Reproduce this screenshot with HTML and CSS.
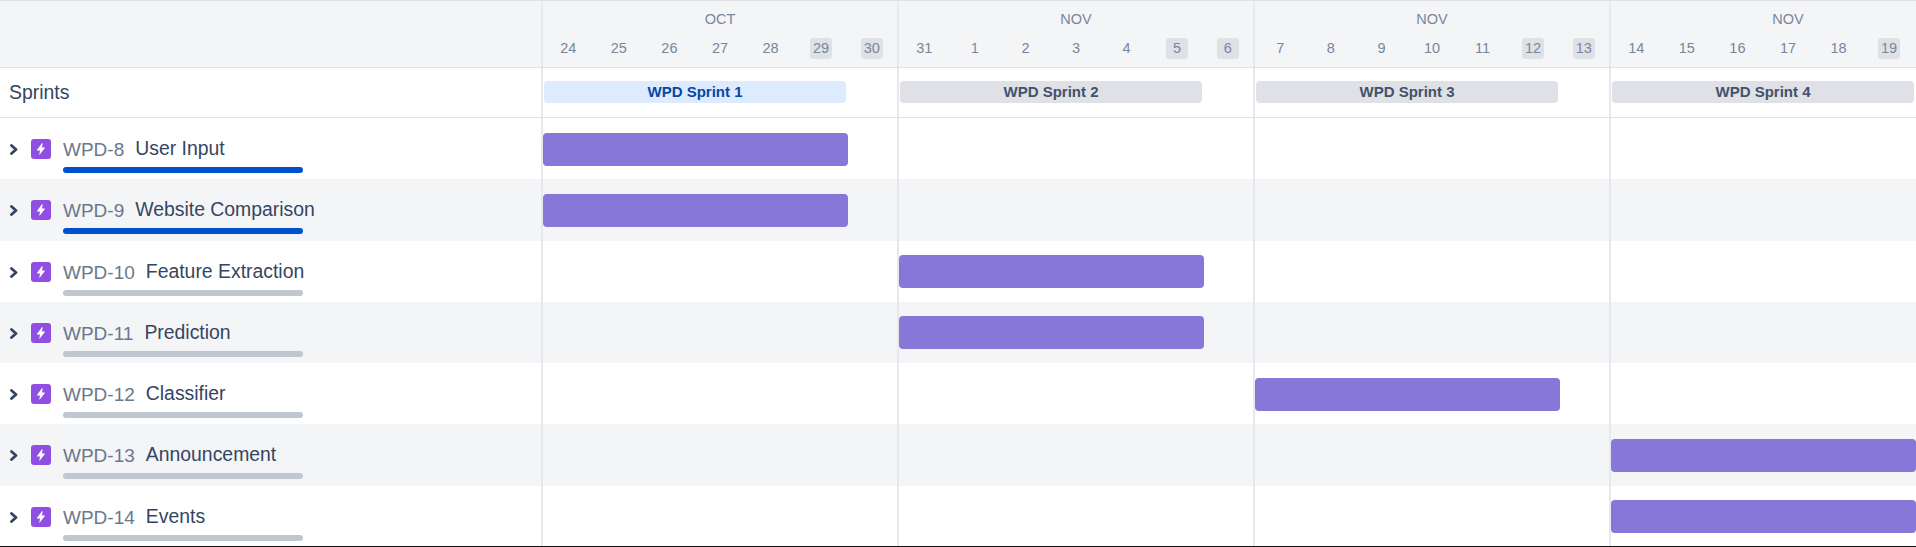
FILE: index.html
```html
<!DOCTYPE html>
<html lang="en">

<head>
    <meta charset="UTF-8">
    <title>Roadmap</title>
    <link rel="stylesheet" href="styles.css">
</head>

<body>
    <svg class="defs" width="0" height="0">
        <symbol id="chevron" viewBox="0 0 8 11">
            <path d="M1.5 1.5 L6 5.5 L1.5 9.5" fill="none" stroke="#344563" stroke-width="2.8" stroke-linecap="round" stroke-linejoin="round"></path>
        </symbol>
        <symbol id="epic" viewBox="0 0 20 20">
            <rect width="20" height="20" rx="3" fill="#904ee2"></rect>
            <path d="M10.9 4.2 L6 10.9 Q5.7 11.5 6.4 11.5 H9 L8.3 15.5 Q8.3 16 8.8 15.6 L13.9 9 Q14.2 8.4 13.6 8.4 H11 L11.6 4.5 Q11.5 3.8 10.9 4.2 Z" fill="#fff"></path>
        </symbol>
    </svg>

    <div class="roadmap">
        <!-- header -->
        <div class="row head">
            <div class="side"></div>
            <div class="month">
                <div class="month-name">OCT</div>
                <div class="days">
                    <span>24</span><span>25</span><span>26</span><span>27</span><span>28</span><span class="weekend">29</span><span class="weekend">30</span>
                </div>
            </div>
            <div class="month">
                <div class="month-name">NOV</div>
                <div class="days">
                    <span>31</span><span>1</span><span>2</span><span>3</span><span>4</span><span class="weekend">5</span><span class="weekend">6</span>
                </div>
            </div>
            <div class="month">
                <div class="month-name">NOV</div>
                <div class="days">
                    <span>7</span><span>8</span><span>9</span><span>10</span><span>11</span><span class="weekend">12</span><span class="weekend">13</span>
                </div>
            </div>
            <div class="month">
                <div class="month-name">NOV</div>
                <div class="days">
                    <span>14</span><span>15</span><span>16</span><span>17</span><span>18</span><span class="weekend">19</span><span></span>
                </div>
            </div>
        </div>

        <!-- sprints -->
        <div class="row sprints">
            <div class="side sprints-title">Sprints</div>
            <div class="month"><div class="sprint active">WPD Sprint 1</div></div>
            <div class="month"><div class="sprint">WPD Sprint 2</div></div>
            <div class="month"><div class="sprint">WPD Sprint 3</div></div>
            <div class="month"><div class="sprint">WPD Sprint 4</div></div>
        </div>

        <!-- epics -->
        <div class="row epic">
            <div class="side">
                <svg class="chevron"><use href="#chevron"></use></svg>
                <svg class="epic-icon"><use href="#epic"></use></svg>
                <div class="epic-info">
                    <div class="epic-title"><span class="key">WPD-8</span><span class="name">User Input</span></div>
                    <div class="progress done"></div>
                </div>
            </div>
            <div class="month"><div class="bar"></div></div>
            <div class="month"></div>
            <div class="month"></div>
            <div class="month"></div>
        </div>

        <div class="row epic">
            <div class="side">
                <svg class="chevron"><use href="#chevron"></use></svg>
                <svg class="epic-icon"><use href="#epic"></use></svg>
                <div class="epic-info">
                    <div class="epic-title"><span class="key">WPD-9</span><span class="name">Website Comparison</span></div>
                    <div class="progress done"></div>
                </div>
            </div>
            <div class="month"><div class="bar"></div></div>
            <div class="month"></div>
            <div class="month"></div>
            <div class="month"></div>
        </div>

        <div class="row epic">
            <div class="side">
                <svg class="chevron"><use href="#chevron"></use></svg>
                <svg class="epic-icon"><use href="#epic"></use></svg>
                <div class="epic-info">
                    <div class="epic-title"><span class="key">WPD-10</span><span class="name">Feature Extraction</span></div>
                    <div class="progress"></div>
                </div>
            </div>
            <div class="month"></div>
            <div class="month"><div class="bar"></div></div>
            <div class="month"></div>
            <div class="month"></div>
        </div>

        <div class="row epic">
            <div class="side">
                <svg class="chevron"><use href="#chevron"></use></svg>
                <svg class="epic-icon"><use href="#epic"></use></svg>
                <div class="epic-info">
                    <div class="epic-title"><span class="key">WPD-11</span><span class="name">Prediction</span></div>
                    <div class="progress"></div>
                </div>
            </div>
            <div class="month"></div>
            <div class="month"><div class="bar"></div></div>
            <div class="month"></div>
            <div class="month"></div>
        </div>

        <div class="row epic">
            <div class="side">
                <svg class="chevron"><use href="#chevron"></use></svg>
                <svg class="epic-icon"><use href="#epic"></use></svg>
                <div class="epic-info">
                    <div class="epic-title"><span class="key">WPD-12</span><span class="name">Classifier</span></div>
                    <div class="progress"></div>
                </div>
            </div>
            <div class="month"></div>
            <div class="month"></div>
            <div class="month"><div class="bar"></div></div>
            <div class="month"></div>
        </div>

        <div class="row epic">
            <div class="side">
                <svg class="chevron"><use href="#chevron"></use></svg>
                <svg class="epic-icon"><use href="#epic"></use></svg>
                <div class="epic-info">
                    <div class="epic-title"><span class="key">WPD-13</span><span class="name">Announcement</span></div>
                    <div class="progress"></div>
                </div>
            </div>
            <div class="month"></div>
            <div class="month"></div>
            <div class="month"></div>
            <div class="month"><div class="bar"></div></div>
        </div>

        <div class="row epic">
            <div class="side">
                <svg class="chevron"><use href="#chevron"></use></svg>
                <svg class="epic-icon"><use href="#epic"></use></svg>
                <div class="epic-info">
                    <div class="epic-title"><span class="key">WPD-14</span><span class="name">Events</span></div>
                    <div class="progress"></div>
                </div>
            </div>
            <div class="month"></div>
            <div class="month"></div>
            <div class="month"></div>
            <div class="month"><div class="bar"></div></div>
        </div>
    </div>
</body>

</html>
```

FILE: styles.css
```css
html,
body {
    margin: 0;
    height: 547px;
    overflow: hidden;
    background-color: #fff;
}

body {
    font-family: 'Liberation Sans', Arial, sans-serif;
    color: #344563;
}

.defs {
    display: block;
    height: 0;
}

.roadmap {
    height: 547px;
    box-sizing: border-box;
    border-top: 1px solid #dfe1e6;
    border-bottom: 1px solid #111;
    overflow: hidden;
}

.row {
    display: flex;
    width: 1966px;
}

.side {
    flex: 0 0 541px;
    box-sizing: border-box;
    display: flex;
    align-items: center;
}

.month {
    flex: 0 0 356px;
    box-sizing: border-box;
    border-left: 2px solid #e6e8ec;
}

/* header */
.head {
    height: 66px;
    background-color: #f4f5f7;
    border-bottom: 1px solid #dfe1e6;
}

.month-name {
    margin-top: 9px;
    font-size: 14.5px;
    line-height: 18px;
    text-align: center;
    color: #7a869a;
}

.days {
    display: grid;
    grid-template-columns: repeat(7, 1fr);
    margin-top: 10px;
    font-size: 14.5px;
    line-height: 21px;
    text-align: center;
    color: #7a869a;
}

.days span {
    justify-self: center;
    width: 22px;
    height: 21px;
    border-radius: 3px;
}

.days .weekend {
    background-color: #dfe1e6;
}

/* sprints */
.sprints {
    height: 49px;
    border-bottom: 1px solid #dfe1e6;
}

.sprints-title {
    padding-left: 9px;
    font-size: 19.4px;
}

.sprints .month {
    padding-top: 13px;
}

.sprint {
    width: 302px;
    height: 22px;
    margin-left: 1px;
    border-radius: 4px;
    background-color: #dfe1e6;
    font-size: 15px;
    font-weight: bold;
    line-height: 22px;
    text-align: center;
    color: #42526e;
}

.sprint.active {
    background-color: #deebff;
    color: #0747a6;
}

/* epic rows */
.epic {
    height: 61.3px;
}

.epic:nth-child(even) {
    background-color: #f4f5f7;
}

.epic .side {
    padding-left: 10px;
    align-items: flex-start;
}

.chevron {
    flex: none;
    width: 8px;
    height: 11px;
    margin-top: 26px;
}

.epic-icon {
    flex: none;
    width: 20px;
    height: 20px;
    margin-top: 21px;
    margin-left: 13px;
}

.epic-info {
    width: 240px;
    margin-left: 12px;
}

.epic-title {
    display: flex;
    height: 30px;
    margin-top: 17px;
    white-space: nowrap;
}

.key {
    font-size: 19px;
    line-height: 30px;
    color: #6b778c;
}

.name {
    margin-left: 11px;
    margin-top: -2px;
    font-size: 19.4px;
    line-height: 30px;
}

.progress {
    height: 6px;
    margin-top: 2px;
    border-radius: 3px;
    background-color: #c1c7d0;
}

.progress.done {
    background-color: #0052cc;
}

.bar {
    width: 305px;
    height: 33px;
    margin-top: 14.5px;
    border-radius: 4px;
    background-color: #8777d9;
}
```
